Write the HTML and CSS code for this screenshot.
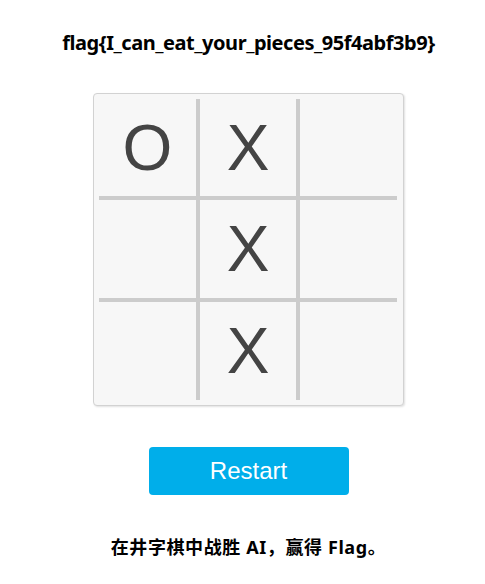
FILE: index.html
```html
<!DOCTYPE html>
<html lang="zh">
<head>
<meta charset="utf-8">
<title>Tic Tac Toe</title>
<link rel="stylesheet" href="styles.css">
</head>
<body>
<main class="page">
  <h1 class="flag">flag{I_can_eat_your_pieces_95f4abf3b9}</h1>
  <div class="board">
    <div class="grid">
      <div class="cell">O</div>
      <div class="cell">X</div>
      <div class="cell"></div>
      <div class="cell"></div>
      <div class="cell">X</div>
      <div class="cell"></div>
      <div class="cell"></div>
      <div class="cell">X</div>
      <div class="cell"></div>
    </div>
  </div>
  <button class="restart" type="button">Restart</button>
  <p class="hint">在井字棋中战胜 AI，赢得 Flag。</p>
</main>
</body>
</html>
```

FILE: styles.css
```css
html, body {
  margin: 0;
  padding: 0;
  background: #ffffff;
}

.page {
  width: 485px;
  box-sizing: border-box;
  padding-left: 12px;
  display: flex;
  flex-direction: column;
  align-items: center;
  font-family: "Noto Sans", "Noto Sans CJK SC", sans-serif;
  color: #000;
}

.flag {
  margin: 31px 0 0;
  font-size: 20px;
  letter-spacing: -0.45px;
  font-weight: bold;
  line-height: 24px;
}

.board {
  margin-top: 38px;
  box-sizing: border-box;
  padding: 5px 6px 5px 5px;
  border: 1px solid #d2d2d2;
  border-radius: 4px;
  background: #f7f7f7;
  box-shadow: 1px 1px 2px rgba(0, 0, 0, 0.12);
}

.grid {
  display: grid;
  grid-template-columns: 97px 96px 97px;
  grid-template-rows: 97px 98px 98px;
  gap: 4px;
  background: #cccccc;
}

.cell {
  background: #f7f7f7;
  display: flex;
  align-items: center;
  justify-content: center;
  font-family: "Liberation Sans", Arial, sans-serif;
  font-size: 64px;
  color: #444444;
  line-height: 1;
}

.restart {
  margin-top: 41px;
  width: 200px;
  height: 48px;
  border: none;
  border-radius: 4px;
  background: #00aeea;
  color: #ffffff;
  font-family: "Liberation Sans", Arial, sans-serif;
  font-size: 24px;
  cursor: pointer;
}

.hint {
  margin: 40px 0 0;
  font-size: 18px;
  letter-spacing: 0.6px;
  font-weight: bold;
  line-height: 24px;
}
```
